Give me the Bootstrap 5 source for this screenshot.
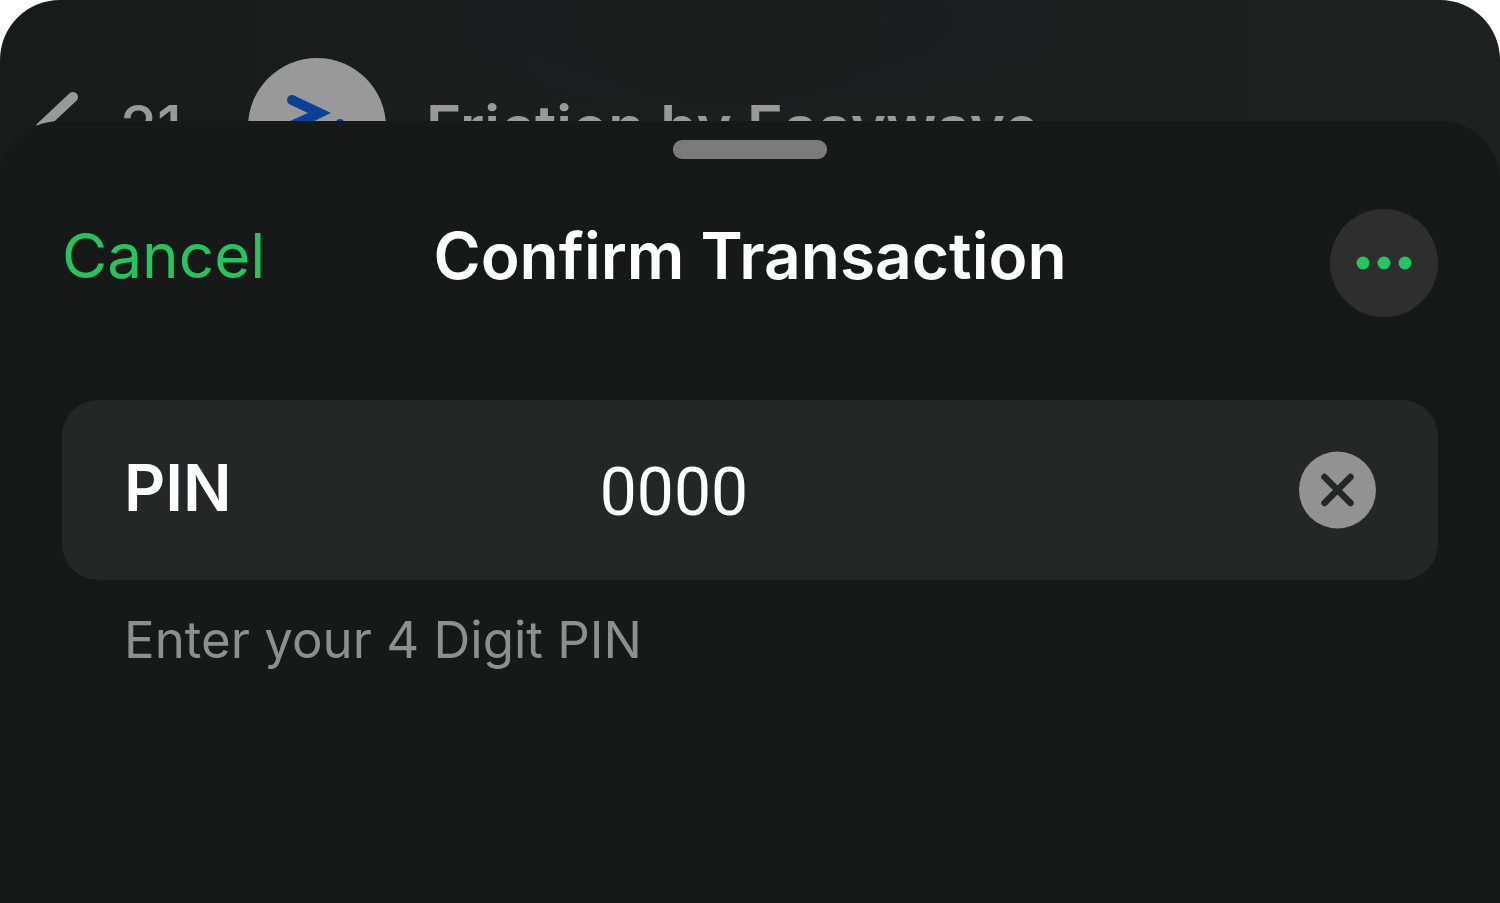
<!DOCTYPE html>
<html lang="en">
<head>
<meta charset="utf-8">
<meta name="viewport" content="width=device-width, initial-scale=1">
<title>Confirm Transaction</title>
<link href="https://cdn.jsdelivr.net/npm/bootstrap@5.3.0/dist/css/bootstrap.min.css" rel="stylesheet">
<style>
  body { background: #fff; font-family: Inter, "Liberation Sans", sans-serif; }
  .phone {
    border-radius: 60px 60px 0 0;
    background:
      radial-gradient(ellipse 160px 90px at 727px 20px, #1c1e1d 92%, transparent 100%),
      radial-gradient(ellipse 380px 120px at 760px 20px, #191d21, transparent),
      linear-gradient(90deg, #191b1a, #1d1f1e 40%, #1f2120);
  }
  .chat-bar { padding: 58px 36px 0; color: #999; font-size: 60px; line-height: 80px; }
  .chat-bar .unread { width: 128px; margin-left: 40px; font-weight: 500; }
  .chat-bar .contact { margin-left: 40px; font-weight: 600; }
  .sheet { margin-top: -75px; padding: 19px 62px 0; border-radius: 60px 60px 0 0; background: #171918; }
  .grabber { width: 154px; height: 19px; border-radius: 9px; background: #7a7a7a; }
  .sheet-head { margin-top: 50px; grid-template-columns: 1fr auto 1fr; line-height: 94px; }
  .sheet-head h1 { font-size: 64px; line-height: 94px; font-weight: 600; }
  .cancel { font-size: 62px; color: #22c55e; }
  .more { width: 108px; height: 108px; background: #2e2e2e; }
  .pin-row { margin-top: 83px; height: 180px; padding: 0 62px; border-radius: 36px; background: #252726; }
  .pin-row label { width: 38%; font-size: 64px; line-height: 80px; font-weight: 600; padding-bottom: 4px; }
  .pin-row input { font: 400 66px/80px Roboto, sans-serif; color: #fff; outline: 0; min-width: 0; padding: 6px 0 0; }
  .hint { padding: 0 62px; margin-top: 28px; font-size: 51px; line-height: 64px; color: #8e8e8e; }
</style>
</head>
<body>
<div class="phone min-vh-100 d-flex flex-column overflow-hidden">
  <header class="chat-bar d-flex align-items-center text-nowrap">
    <a href="#" aria-label="Back" class="d-flex">
      <svg width="44" height="80" viewBox="0 0 44 80" fill="none" stroke="#999" stroke-width="10" stroke-linecap="round" stroke-linejoin="round"><path d="M37 10 L5 40 L37 70"/></svg>
    </a>
    <span class="unread">21</span>
    <svg width="138" height="138" viewBox="0 0 138 138" role="img" aria-label="Contact">
      <circle cx="69" cy="69" r="69" fill="#999"/>
      <g fill="#0a4194">
        <circle cx="44" cy="42" r="5"/>
        <path d="M46 37.500 L83 55 L58 67 L42 63 L60 55 L42 46.500 Z"/>
        <circle cx="92" cy="65" r="4"/>
      </g>
    </svg>
    <span class="contact">Friction by Easywave</span>
  </header>
  <main class="sheet position-relative flex-grow-1">
    <div class="grabber mx-auto"></div>
    <div class="sheet-head d-grid align-items-start text-nowrap">
      <button type="button" class="cancel border-0 bg-transparent p-0 text-start">Cancel</button>
      <h1 class="text-white m-0">Confirm Transaction</h1>
      <button type="button" class="more border-0 rounded-circle p-0 d-flex align-items-center justify-content-center ms-auto" aria-label="More">
        <svg width="56" height="14" viewBox="0 0 56 14" fill="#22c55e"><circle cx="7" cy="7" r="6.500"/><circle cx="28" cy="7" r="6.500"/><circle cx="49" cy="7" r="6.500"/></svg>
      </button>
    </div>
    <div class="pin-row d-flex align-items-center">
      <label for="pin" class="text-white flex-shrink-0">PIN</label>
      <input id="pin" type="text" inputmode="numeric" maxlength="4" value="0000" class="flex-grow-1 border-0 bg-transparent" aria-describedby="pin-hint">
      <button type="button" class="border-0 bg-transparent p-0 d-flex flex-shrink-0" aria-label="Clear">
        <svg width="77" height="78" viewBox="0 0 77 78"><circle cx="38.500" cy="39" r="38.500" fill="#929292"/><path d="M25.500 26 L51.500 52 M51.500 26 L25.500 52" stroke="#252726" stroke-width="6.500" stroke-linecap="round"/></svg>
      </button>
    </div>
    <p id="pin-hint" class="hint mb-0">Enter your 4 Digit PIN</p>
  </main>
</div>
<script src="https://cdn.jsdelivr.net/npm/bootstrap@5.3.0/dist/js/bootstrap.bundle.min.js"></script>
</body>
</html>
